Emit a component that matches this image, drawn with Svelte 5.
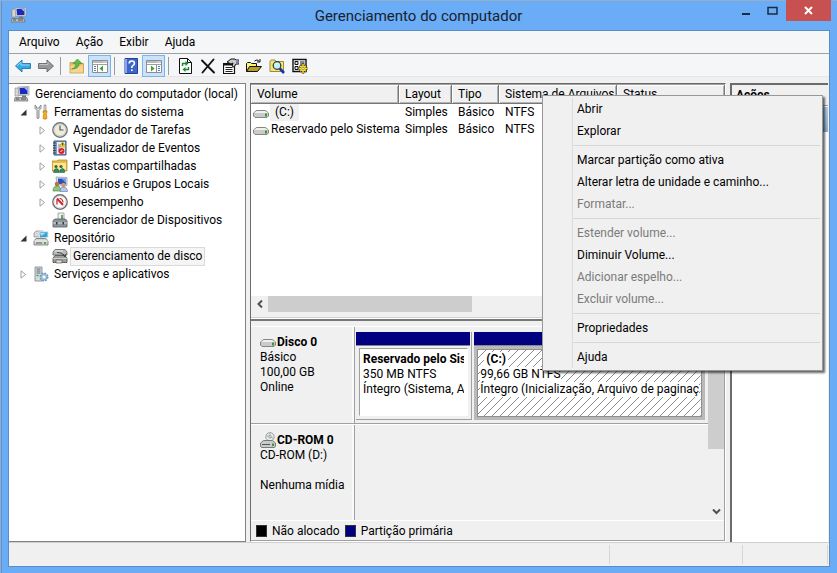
<script>
  const menus = ['Arquivo', 'Ação', 'Exibir', 'Ajuda'];

  const tools = [
    { icon: 'back', label: 'Voltar' },
    { icon: 'forward', label: 'Avançar' },
    { sep: true },
    { icon: 'up', label: 'Um nível acima' },
    { icon: 'treePane', label: 'Mostrar árvore de console', on: true },
    { sep: true },
    { icon: 'help', label: 'Ajuda' },
    { icon: 'actionPane', label: 'Mostrar painel de ações', on: true },
    { sep: true },
    { icon: 'refresh', label: 'Atualizar' },
    { icon: 'remove', label: 'Excluir' },
    { icon: 'props', label: 'Propriedades' },
    { icon: 'open', label: 'Abrir' },
    { icon: 'search', label: 'Explorar' },
    { icon: 'settings', label: 'Configurações' }
  ];

  const tree = [
    { level: 0, icon: 'computer', text: 'Gerenciamento do computador (local)' },
    { level: 1, icon: 'tools', text: 'Ferramentas do sistema', state: 'open' },
    { level: 2, icon: 'clock', text: 'Agendador de Tarefas', state: 'closed' },
    { level: 2, icon: 'events', text: 'Visualizador de Eventos', state: 'closed' },
    { level: 2, icon: 'shared', text: 'Pastas compartilhadas', state: 'closed' },
    { level: 2, icon: 'users', text: 'Usuários e Grupos Locais', state: 'closed' },
    { level: 2, icon: 'perf', text: 'Desempenho', state: 'closed' },
    { level: 2, icon: 'devices', text: 'Gerenciador de Dispositivos' },
    { level: 1, icon: 'storage', text: 'Repositório', state: 'open' },
    { level: 2, icon: 'diskmgmt', text: 'Gerenciamento de disco', selected: true },
    { level: 1, icon: 'services', text: 'Serviços e aplicativos', state: 'closed' }
  ];

  const volumes = [
    { name: '(C:)', layout: 'Simples', type: 'Básico', fs: 'NTFS', focus: true },
    { name: 'Reservado pelo Sistema', layout: 'Simples', type: 'Básico', fs: 'NTFS' }
  ];

  const contextMenu = [
    [{ text: 'Abrir' }, { text: 'Explorar' }],
    [
      { text: 'Marcar partição como ativa' },
      { text: 'Alterar letra de unidade e caminho...' },
      { text: 'Formatar...', off: true }
    ],
    [
      { text: 'Estender volume...', off: true },
      { text: 'Diminuir Volume...' },
      { text: 'Adicionar espelho...', off: true },
      { text: 'Excluir volume...', off: true }
    ],
    [{ text: 'Propriedades' }],
    [{ text: 'Ajuda' }]
  ];
</script>

{#snippet icon(name)}
  <svg class="icon" width="16" height="16" viewBox="0 0 16 16" aria-hidden="true">
    {#if name === 'computer'}
      <path d="M1 2h4v8H1z" fill="#d8d8d0" stroke="#888" stroke-width=".6" />
      <path d="M4 1l11-.5V9L5 9.500z" fill="#dfe3e8" stroke="#8c939b" stroke-width=".7" />
      <path d="M5.500 2l8-.5V8l-7.500.3z" fill="#1d2bb4" />
      <path d="M10 1.700l3.500-.2V5z" fill="#9db8f5" />
      <path d="M8 9.500h4v1.500H8z" fill="#777" />
      <path d="M1 11.500h12l1 3.500H0z" fill="#b9bcb8" stroke="#6a6d6a" stroke-width=".7" />
      <path d="M2 13h3M7 13h5" stroke="#4d504d" />
    {:else if name === 'tools'}
      <path d="M2 1v3.500l2 2V14q1 1.500 2 0V6.500l2-2V1L6.500 2.500V4h-3V2.500z" fill="#d7dbdd" stroke="#73797d" stroke-width=".8" />
      <path d="M11 1h2v6h-2z" fill="#ddd" stroke="#777" stroke-width=".6" />
      <path d="M10 7h4v1.500l-.7 1L14 14.500q-2 1.500-4 0l.7-5-.7-1z" fill="#f2ac1e" stroke="#b87200" stroke-width=".6" />
    {:else if name === 'clock'}
      <circle cx="8" cy="8" r="7.200" fill="#f3ebcf" stroke="#6f7780" stroke-width="1.400" />
      <circle cx="8" cy="8" r="5.900" fill="none" stroke="#c3cbd2" />
      <path d="M8 3.500V8h3.500" fill="none" stroke="#3b5b8a" stroke-width="1.200" />
    {:else if name === 'events'}
      <path d="M2 1h12v14H2z" fill="#7f9cc6" stroke="#3f5680" />
      <path d="M5 2h8v12H5z" fill="#e8eef7" />
      <path d="M1 3h3M1 5.500h3M1 8h3M1 10.500h3M1 13h3" stroke="#333" stroke-width=".8" />
      <path d="M6 5h3M6 7h2M6 9h2M6 11h2" stroke="#5b77a8" stroke-width=".8" />
      <path d="M10.500 1.500L14 7H7.500z" fill="#ffd92e" stroke="#a88400" stroke-width=".5" />
      <path d="M10.700 3v2.500" stroke="#222" />
      <circle cx="9.500" cy="11" r="3" fill="#d8262b" />
      <path d="M8.500 12l2-2" stroke="#fff" />
    {:else if name === 'shared'}
      <path d="M0 3h5l1-1h9v11H0z" fill="#e8bc4c" stroke="#a97f1d" stroke-width=".7" />
      <path d="M1 5h13v7H1z" fill="#ffe596" />
      <circle cx="4" cy="8.500" r="1.600" fill="#356b3a" />
      <circle cx="9" cy="8.500" r="1.600" fill="#356b3a" />
      <path d="M1.500 14.500q.5-4 3-4t2.500 4zM7.500 14.500q.5-4 3-4t2 4z" fill="#2f8f63" stroke="#184b34" stroke-width=".5" />
    {:else if name === 'users'}
      <path d="M4 1l11 .5v8L5 9z" fill="#d7dde8" stroke="#8993a6" stroke-width=".7" />
      <path d="M6 2.500l8 .3v5.700L6 8z" fill="#2a4fc4" />
      <path d="M10 3l4 .2V7z" fill="#7da2f0" />
      <circle cx="5" cy="8" r="2.300" fill="#b9793c" />
      <path d="M1 15q0-5 4-5t4 5z" fill="#8fc57c" stroke="#4c7d3b" stroke-width=".6" />
      <circle cx="11.500" cy="9" r="2.200" fill="#d79a5f" />
      <path d="M8 15.500q0-4.500 3.500-4.500t4 4.500z" fill="#b5c8ec" stroke="#5a74a8" stroke-width=".6" />
    {:else if name === 'perf'}
      <circle cx="8" cy="8" r="7.200" fill="#fff" stroke="#6d6d6d" stroke-width="1.400" />
      <circle cx="8" cy="8" r="5.900" fill="none" stroke="#d1d1d1" stroke-width=".8" />
      <path d="M5 10.500V5.500" fill="none" stroke="#c8282b" stroke-width="1.300" />
      <path d="M5 4.500l6 6.500" fill="none" stroke="#c8282b" stroke-width="1.900" />
      <path d="M7.500 4.500q3-.3 3.500 4" fill="none" stroke="#c8282b" stroke-width="1.200" />
    {:else if name === 'devices'}
      <path d="M6 1h6v7H6z" fill="#edf1f0" stroke="#8f9a9c" stroke-width=".8" />
      <path d="M9 3h2v4H9z" fill="#6da64a" />
      <path d="M1 8.500L3 7h10l2 1.500V15H1z" fill="#8d969e" stroke="#535b62" stroke-width=".8" />
      <path d="M1 11h14" stroke="#d3d8dc" />
      <path d="M4 10h1.500v2.500H4zM10.500 10H12v2.500h-1.500z" fill="#333a40" />
    {:else if name === 'storage'}
      <path d="M1 3l2-2h7l2 2v4H1z" fill="#d6d9d8" stroke="#858a88" stroke-width=".7" />
      <path d="M6 2l9-.5v6L6.500 8z" fill="#3da1d8" stroke="#dfe9ef" />
      <path d="M7 3l6-.2-5 3.200z" fill="#a3ddf7" />
      <path d="M1 11l2-2.500h10l2 2.500v4H1z" fill="#cfd2d0" stroke="#6e7371" stroke-width=".8" />
      <path d="M1 11h14" stroke="#fff" stroke-width=".7" />
      <path d="M3 13h6" stroke="#585d5b" />
      <path d="M11 12h2v2h-2z" fill="#54ad3b" />
    {:else if name === 'diskmgmt'}
      <path d="M1 4l2-2.500h10L15 4v3H1z" fill="#b9bbb8" stroke="#5e615f" stroke-width=".8" />
      <path d="M3 3h8" stroke="#eee" />
      <path d="M1 10l2-2.500h10l2 2.500v4.500H1z" fill="#9b9e9b" stroke="#4b4e4c" stroke-width=".8" />
      <path d="M1 10.500h14" stroke="#e1e3e1" stroke-width=".7" />
      <path d="M5 4.500q6 0 7 3.500M11 6l2 3 1-3" fill="none" stroke="#414441" />
      <path d="M4 12h6v3H4z" fill="#dcdedc" stroke="#444" stroke-width=".6" />
    {:else if name === 'services'}
      <path d="M2 1h7v14H2z" fill="#d5dbe0" stroke="#7b858d" stroke-width=".8" />
      <path d="M3.500 3h4M3.500 5h4M3.500 7h4" stroke="#5e6a74" />
      <path d="M3.500 9.500h2" stroke="#45a53c" stroke-width="1.500" />
      <circle cx="11" cy="11" r="3.700" fill="#b7d0e8" stroke="#6d93b7" stroke-width="1.600" stroke-dasharray="1.700 1.200" />
      <circle cx="11" cy="11" r="2.800" fill="#b7d0e8" stroke="#6d93b7" stroke-width=".5" />
      <circle cx="11" cy="11" r="1.200" fill="#fff" />
    {:else if name === 'back'}
      <path d="M.5 8L7 2v3.500h8.500v5H7V14z" fill="#36aae6" stroke="#2277ab" stroke-width=".9" stroke-linejoin="round" />
      <path d="M2 7.800l4-3.600V7h8.500" fill="none" stroke="#8fd7f8" />
    {:else if name === 'forward'}
      <path d="M15.500 8L9 2v3.500H.5v5H9V14z" fill="#999" stroke="#686868" stroke-width=".9" stroke-linejoin="round" />
      <path d="M1.500 6.500H10V4.200" fill="none" stroke="#c4c4c4" />
    {:else if name === 'up'}
      <path d="M1 4.500h5l1 1h7.500V15H1z" fill="#e9bf62" stroke="#c39a48" stroke-width=".8" />
      <path d="M1.500 7.500h12.500v7H1.500z" fill="#f5d590" />
      <path d="M2.500 11q4.500-1 4-5.500H4L8.500 1l4.500 4.500h-2.700Q10 11 2.500 11z" fill="#63b94b" stroke="#3c8f2e" stroke-width=".6" />
    {:else if name === 'treePane' || name === 'actionPane'}
      <path d="M.5 2.500h15v12H.5z" fill="#fff" stroke="#8b8f93" />
      <path d="M1 3h14v2H1z" fill="#b7bbc0" />
      <path d="M1 6.500h14" stroke="#9da1a5" />
      <path d="M11.500 4h1M13.500 4h1" stroke="#fff" />
      {#if name === 'treePane'}
        <path d="M5.500 7v7" stroke="#8b8f93" />
        <path d="M2 8.500h2M2 10.500h2M2 12.500h2" stroke="#4b80b8" />
        <path d="M11 7.500v6L7.500 10.500z" fill="#3ba42f" />
      {:else}
        <path d="M10.500 7v7" stroke="#8b8f93" />
        <path d="M12 8.500h2M12 10.500h2M12 12.500h2" stroke="#4b80b8" />
        <path d="M5 7.500v6l3.500-3z" fill="#3ba42f" />
      {/if}
    {:else if name === 'help'}
      <path d="M2 .5h12.500v15H2z" fill="#3f66c6" stroke="#22409a" />
      <path d="M2 1h2v14H2z" fill="#89a6e6" />
      <path d="M6.200 5.500q0-2.500 2.600-2.500t2.600 2.200q0 1.500-1.300 2.200T8.800 9.500v.5" fill="none" stroke="#fff" stroke-width="1.600" />
      <path d="M8 11.500h1.700V13H8z" fill="#fff" />
    {:else if name === 'refresh'}
      <path d="M2.500.5h8l4 4v11h-12z" fill="#fff" stroke="#111" />
      <path d="M10.500.5v4h4" fill="none" stroke="#111" />
      <path d="M5.500 8V5.500h4" fill="none" stroke="#148a2a" stroke-width="1.400" />
      <path d="M8.500 3v5l3-2.500z" fill="#148a2a" />
      <path d="M11.500 9v2.500h-4" fill="none" stroke="#148a2a" stroke-width="1.400" />
      <path d="M8.500 9v5l-3-2.500z" fill="#148a2a" />
    {:else if name === 'remove'}
      <path d="M2 2.500l12 12M13.500 1.500l-11 13" stroke="#111" stroke-width="1.900" stroke-linecap="round" />
    {:else if name === 'props'}
      <path d="M.5 5.500h11v10H.5z" fill="#fff" stroke="#111" stroke-width="1.200" />
      <path d="M1 6.500h9" stroke="#111" stroke-width="2" />
      <path d="M2.500 9.500h7M2.500 11.500h7M2.500 13.500h7" stroke="#222" />
      <path d="M4 4l4-3h4l1 1h3v4h-3l-2 3-2-1 1-3-2 1-2-1z" fill="#c9c9c9" stroke="#111" />
      <path d="M13 1.500h2.500v4H13z" fill="#7c86b4" />
    {:else if name === 'open'}
      <path d="M.5 13.500v-8l1-1h3l1 1h5v3" fill="#fff27a" stroke="#111" />
      <path d="M.5 13.500l3-5h12l-4 5z" fill="#b5a21c" stroke="#111" />
      <path d="M8.500 3q2.500-2.500 5 .5M14 1v3h-3" fill="none" stroke="#111" />
    {:else if name === 'search'}
      <path d="M1 3.500l1-1.500h4l1 1.500h7.500v10H1z" fill="#f6e47c" stroke="#9c8c3c" />
      <circle cx="8" cy="7.500" r="3.800" fill="#bff2f2" stroke="#333" stroke-width="1.200" />
      <path d="M10.800 10.500l4.200 4.500" stroke="#1d31a8" stroke-width="2.600" />
      <path d="M6.500 7l2-1.500" stroke="#fff" />
    {:else if name === 'settings'}
      <path d="M1 1.500h13v12H1z" fill="#fff" stroke="#111" stroke-width="1.400" />
      <path d="M3 3.500h3v3H3zM3 8.500h3v3H3z" fill="#ddd" stroke="#111" />
      <path d="M8 4h4.500M8 6h4.500" stroke="#111" />
      <path d="M11 5.500v10M6.500 10.500h9M7.800 7.300l6.400 6.400M14.200 7.300l-6.400 6.400" stroke="#222" stroke-width="2.400" />
      <path d="M11 6v9M7 10.500h8.500M8.200 7.700l5.600 5.600M13.800 7.700l-5.600 5.600" stroke="#ffe020" stroke-width="1.500" />
      <circle cx="11" cy="10.500" r="2.600" fill="#ffe020" />
      <circle cx="11" cy="10.500" r="1.200" fill="#fff" stroke="#555" stroke-width=".6" />
    {:else if name === 'drive'}
      <path d="M.5 8l3-2.500h9l3 2.500v3l-1.500 1.500H2L.5 11z" fill="#c9cbc9" stroke="#797c79" stroke-width=".9" />
      <path d="M1 8l3-2h8l3 2z" fill="#efefef" />
      <path d="M12 8.500h2v3h-2z" fill="#3f9431" />
    {:else if name === 'cdrom'}
      <circle cx="10" cy="4.800" r="4.200" fill="#e7ebe9" stroke="#888d8a" stroke-width=".8" />
      <path d="M10 1v3M6.500 4h2.500M11 5l2.500 1.500" stroke="#9cb7a8" />
      <circle cx="10" cy="4.800" r="1.200" fill="#fff" stroke="#777" stroke-width=".7" />
      <path d="M.5 11l3-2.500h9l3 2.500v3l-1 1.500h-13l-1-1.500z" fill="#c9cbc9" stroke="#6d706d" stroke-width=".9" />
      <path d="M2 12.500h8" stroke="#555" />
      <path d="M12 11.500h2v2.500h-2z" fill="#3f9431" />
    {/if}
  </svg>
{/snippet}

<div class="window">
  <header class="title">
    {@render icon('computer')}
    <h1>Gerenciamento do computador</h1>
    <div class="controls">
      <button aria-label="Minimizar"><svg width="10" height="11"><path d="M1 8h8v2H1z" fill="#1b2b42" /></svg></button>
      <button aria-label="Maximizar"><svg width="11" height="9"><path d="M1 1.500h9V8H1z" fill="none" stroke="#1b2b42" stroke-width="1.500" /></svg></button>
      <button class="close" aria-label="Fechar"><svg width="9" height="9"><path d="M1 1l7 7M8 1l-7 7" stroke="#fff" stroke-width="2" /></svg></button>
    </div>
  </header>

  <div class="client">
    <nav class="menubar">
      {#each menus as m}<button>{m}</button>{/each}
    </nav>
    <div class="toolbar">
      {#each tools as t}
        {#if t.sep}
          <span class="tsep"></span>
        {:else}
          <button class:on={t.on} aria-label={t.label}>{@render icon(t.icon)}</button>
        {/if}
      {/each}
    </div>

    <main class="panes">
      <ul class="tree">
        {#each tree as node}
          <li class="l{node.level}">
            {#if node.level}
              <span class="twist">
                {#if node.state === 'open'}
                  <svg width="7" height="7"><path d="M6.500.5v6h-6z" fill="#333" /></svg>
                {:else if node.state === 'closed'}
                  <svg width="7" height="9"><path d="M1 .8l4.500 3.700L1 8.200z" fill="#fff" stroke="#a0a0a0" /></svg>
                {/if}
              </span>
            {/if}
            {@render icon(node.icon)}
            <button class:selected={node.selected}>{node.text}</button>
          </li>
        {/each}
      </ul>

      <section class="center">
        <div class="volumes">
          <table>
            <colgroup><col class="c1" /><col class="c2" /><col class="c3" /><col class="c4" /><col /></colgroup>
            <thead>
              <tr><th>Volume</th><th>Layout</th><th>Tipo</th><th>Sistema de Arquivos</th><th>Status</th></tr>
            </thead>
            <tbody>
              {#each volumes as v}
                <tr>
                  <td class="name"><div>{@render icon('drive')}<span class:focus={v.focus}>{v.name}</span></div></td>
                  <td>{v.layout}</td><td>{v.type}</td><td>{v.fs}</td><td></td>
                </tr>
              {/each}
            </tbody>
          </table>
          <div class="hscroll">
            <button aria-label="Rolar para a esquerda"><svg width="6" height="8"><path d="M5 .5L1.500 4 5 7.500" fill="none" stroke="#505050" stroke-width="2" /></svg></button>
            <div class="thumb"></div>
          </div>
        </div>

        <div class="graph">
          <div class="disks">
            <div class="rows">
              <div class="disk">
                <div class="info">
                  <div class="head">{@render icon('drive')}<b>Disco 0</b></div>
                  <div>Básico</div>
                  <div>100,00 GB</div>
                  <div>Online</div>
                </div>
                <div class="parts">
                  <div class="part small">
                    <div class="bar"></div>
                    <div class="box">
                      <div class="body"><b>Reservado pelo Sistema</b><span>350 MB NTFS</span><span>Íntegro (Sistema, Ativo)</span></div>
                    </div>
                  </div>
                  <div class="part big">
                    <div class="bar"></div>
                    <div class="box">
                      <svg class="hatch" aria-hidden="true">
                        <defs>
                          <pattern id="hatch" width="8" height="8" patternUnits="userSpaceOnUse">
                            <path d="M-1 9L9-1" stroke="#8c8c8c" shape-rendering="crispEdges" />
                          </pattern>
                        </defs>
                        <rect width="100%" height="100%" fill="url(#hatch)" />
                      </svg>
                      <div class="body"><b class="letter">(C:)</b><span>99,66 GB NTFS</span><span>Íntegro (Inicialização, Arquivo de paginação)</span></div>
                    </div>
                  </div>
                </div>
              </div>
              <div class="disk cd">
                <div class="info">
                  <div class="head">{@render icon('cdrom')}<b>CD-ROM 0</b></div>
                  <div>CD-ROM (D:)</div>
                  <div class="gap">Nenhuma mídia</div>
                </div>
                <div class="parts"></div>
              </div>
            </div>
            <div class="vscroll">
              <div class="thumb"></div>
              <button aria-label="Rolar para baixo"><svg width="9" height="7"><path d="M1 1.500L4.500 5 8 1.500" fill="none" stroke="#505050" stroke-width="2" /></svg></button>
            </div>
          </div>
          <div class="legend">
            <i class="free"></i><span>Não alocado</span><i class="primary"></i><span>Partição primária</span>
          </div>
        </div>
      </section>

      <aside class="actions">
        <h2>Ações</h2>
        <div class="group"></div>
      </aside>

      <div class="context" role="menu">
        {#each contextMenu as group}
          <div class="cgroup">
            {#each group as item}
              <button role="menuitem" disabled={item.off}>{item.text}</button>
            {/each}
          </div>
        {/each}
      </div>
    </main>

    <footer class="status"><span></span><span class="s2"></span><span class="s3"></span></footer>
  </div>
</div>

<style>
  .window, .window * { box-sizing: border-box; }
  .window {
    min-height: 100vh;
    display: flex;
    flex-direction: column;
    padding: 0 7px 6px 8px;
    background: #6aacf6;
    box-shadow: inset 1px 1px #94aeca, inset 2px 0 #5793d6;
    font: 12px/16px Roboto, "Open Sans", sans-serif;
    color: #000;
  }
  button {
    font: inherit;
    color: inherit;
    margin: 0;
    padding: 0;
    border: 0;
    background: none;
    display: flex;
    align-items: center;
    white-space: nowrap;
  }
  .icon { flex: none; display: block; }

  .title { height: 30px; display: flex; align-items: flex-start; position: relative; padding-left: 3px; }
  .title .icon { margin-top: 7px; }
  h1 { flex: 1; margin: 0; font-size: 15px; font-weight: 400; line-height: 32px; text-align: center; color: #18222f; padding-left: 78px; }
  .controls { display: flex; margin-right: -1px; }
  .controls button { width: 27px; height: 21px; justify-content: center; }
  .controls .close { width: 45px; background: #c75050; }

  .client { flex: 1; display: flex; flex-direction: column; border: 1px solid #5a8dc6; background: #f0f0f0; }
  .menubar { display: flex; gap: 16px; height: 23px; padding-left: 10px; background: #f5f6f7; border-bottom: 1px solid #a0a0a0; }
  .toolbar { display: flex; height: 23px; padding: 1px 0 0 2px; background: #f5f6f7; border-bottom: 1px solid #e6e6e6; }
  .toolbar button { width: 23px; height: 22px; justify-content: center; }
  .toolbar .on { background: #cbe2f8; border: 1px solid #79b4ee; }
  .tsep { width: 1px; height: 18px; margin: 2px 4px 0 3px; background: #9a9a9a; }

  .panes { position: relative; flex: 1; display: flex; gap: 4px; padding-top: 6px; }

  .tree { width: 237px; margin: 0; padding: 1px 0 0; list-style: none; background: #fff; border: 1px solid #828282; border-left: 0; }
  .tree li { display: flex; align-items: center; height: 18px; gap: 3px; padding-left: 5px; }
  .tree .l1 { padding-left: 8px; }
  .tree .l2 { padding-left: 27px; }
  .twist { width: 13px; display: flex; justify-content: center; }
  .tree button { height: 17px; padding: 0 2px; }
  .tree .selected { background: #f5f5f5; outline: 1px solid #dadada; }

  .center { flex: 1; min-width: 0; display: flex; flex-direction: column; border: 1px solid #6b6b6b; border-right-color: #fff; border-bottom-color: #fff; }
  .volumes { height: 237px; display: flex; flex-direction: column; justify-content: space-between; background: #fff; border-top: 1px solid #a0a0a0; border-bottom: 2px solid #777; }
  table { width: 100%; table-layout: fixed; border-collapse: separate; border-spacing: 0; }
  .c1 { width: 148px; }
  .c2 { width: 53px; }
  .c3 { width: 47px; }
  .c4 { width: 118px; }
  th { height: 19px; padding: 0 0 0 6px; background: #f0f0f0; border-right: 1px solid #777; border-bottom: 1px solid #777; box-shadow: inset 1px 1px #fff, inset -1px -1px #b4b4b4; font-weight: 400; text-align: left; white-space: nowrap; }
  td { height: 17px; padding: 0 0 0 6px; white-space: nowrap; line-height: 17px; }
  td.name { padding: 0 0 0 2px; }
  td.name div { display: flex; align-items: center; gap: 1px; }
  td.name span { padding: 0 1px; }
  td.name .focus { background: #f0f0f0; padding: 0 5px; }
  .hscroll { display: flex; height: 22px; padding-bottom: 5px; background: #f0f0f0; border-bottom: 1px solid #d0d0d0; margin-bottom: 1px; }
  .hscroll button { width: 17px; justify-content: center; }
  .hscroll .thumb { width: 43%; background: #cdcdcd; }

  .graph { flex: 1; display: flex; flex-direction: column; padding-top: 5px; border-right: 1px solid #a0a0a0; border-bottom: 1px solid #a0a0a0; }
  .disks { flex: 1; display: flex; border-bottom: 1px solid #fff; }
  .rows { flex: 1; min-width: 0; display: flex; flex-direction: column; }
  .disk { display: flex; height: 98px; border-top: 1px solid #fff; border-bottom: 1px solid #a0a0a0; }
  .disk.cd { flex: 1; border-bottom: 0; }
  .info { width: 104px; padding: 5px 0 0 9px; border-right: 1px solid #a0a0a0; box-shadow: inset -2px 0 #fafafa; line-height: 15px; white-space: nowrap; }
  .head { display: flex; align-items: flex-end; gap: 1px; height: 18px; }
  .info .gap { padding-top: 15px; }
  b { font-weight: 700; }
  .parts { flex: 1; min-width: 0; display: flex; padding: 5px 3px 0 1px; }
  .part { display: flex; flex-direction: column; height: 88px; }
  .part.small { flex: 1; min-width: 0; border-right: 1px solid #a0a0a0; border-bottom: 1px solid #a0a0a0; margin-right: 2px; }
  .part.big { flex: 2; min-width: 0; }
  .bar { height: 14px; background: #000080; border-bottom: 1px solid #888; }
  .small .bar { margin-right: 1px; }
  .box { position: relative; flex: 1; min-height: 0; display: flex; }
  .small .box { margin: 2px 3px 3px; background: #fff; border: 1px solid #a0a0a0; border-right-color: #fff; border-bottom-color: #fff; }
  .big .box { background: #fff; border: 3px solid #b9b9b9; outline: 1px solid #8f8f8f; outline-offset: -4px; }
  .hatch { position: absolute; inset: 1px; width: calc(100% - 2px); height: calc(100% - 2px); }
  .body { position: relative; flex: 1; min-width: 0; display: flex; flex-direction: column; align-items: flex-start; overflow: hidden; margin: 3px 3px 0; line-height: 15px; white-space: nowrap; }
  .big .body > * { background: #fff; }
  .body .letter { margin-left: 4px; padding: 0 2px; }
  .vscroll { width: 16px; display: flex; flex-direction: column; background: #f0f0f0; }
  .vscroll .thumb { height: 123px; background: #cdcdcd; }
  .vscroll button { margin-top: auto; height: 17px; justify-content: center; }

  .legend { display: flex; align-items: center; gap: 5px; height: 19px; padding-left: 5px; }
  .legend i { width: 11px; height: 12px; border: 1px solid #333; }
  .legend .free { background: #000; }
  .legend .primary { background: #000080; }

  .actions { width: 98px; background: #fff; border-top: 2px solid #6b6b6b; border-left: 2px solid #6b6b6b; margin-right: 1px; }
  h2 { margin: 0; height: 21px; padding-left: 4px; background: #f0f0f0; border-bottom: 1px solid #a0a0a0; font-size: 12px; font-weight: 700; line-height: 20px; }
  .group { height: 25px; margin-top: 1px; background: linear-gradient(#b4cbe2, #8ea9c6); }

  .context { position: absolute; top: 18px; right: 6px; width: 281px; padding: 2px; background: #f0f0f0; border: 1px solid #979797; box-shadow: 2px 2px 2px rgba(0, 0, 0, .6); }
  .cgroup { padding-left: 4px; margin-left: 27px; border-left: 1px solid #dcdcdc; position: relative; }
  .cgroup + .cgroup { padding-top: 7px; }
  .cgroup + .cgroup::before { content: ""; position: absolute; top: 3px; left: 0; right: 0; height: 1px; background: #d7d7d7; }
  .cgroup button { height: 22px; width: 100%; }
  .cgroup button:disabled { color: #7b7b7b; }

  .status { display: flex; height: 24px; border-top: 1px solid #d0d0d0; padding: 2px 1px 2px 0; }
  .status span { flex: 1; border-right: 1px solid #d7d7d7; }
  .status .s2 { flex: none; width: 133px; }
  .status .s3 { flex: none; width: 85px; }
</style>
